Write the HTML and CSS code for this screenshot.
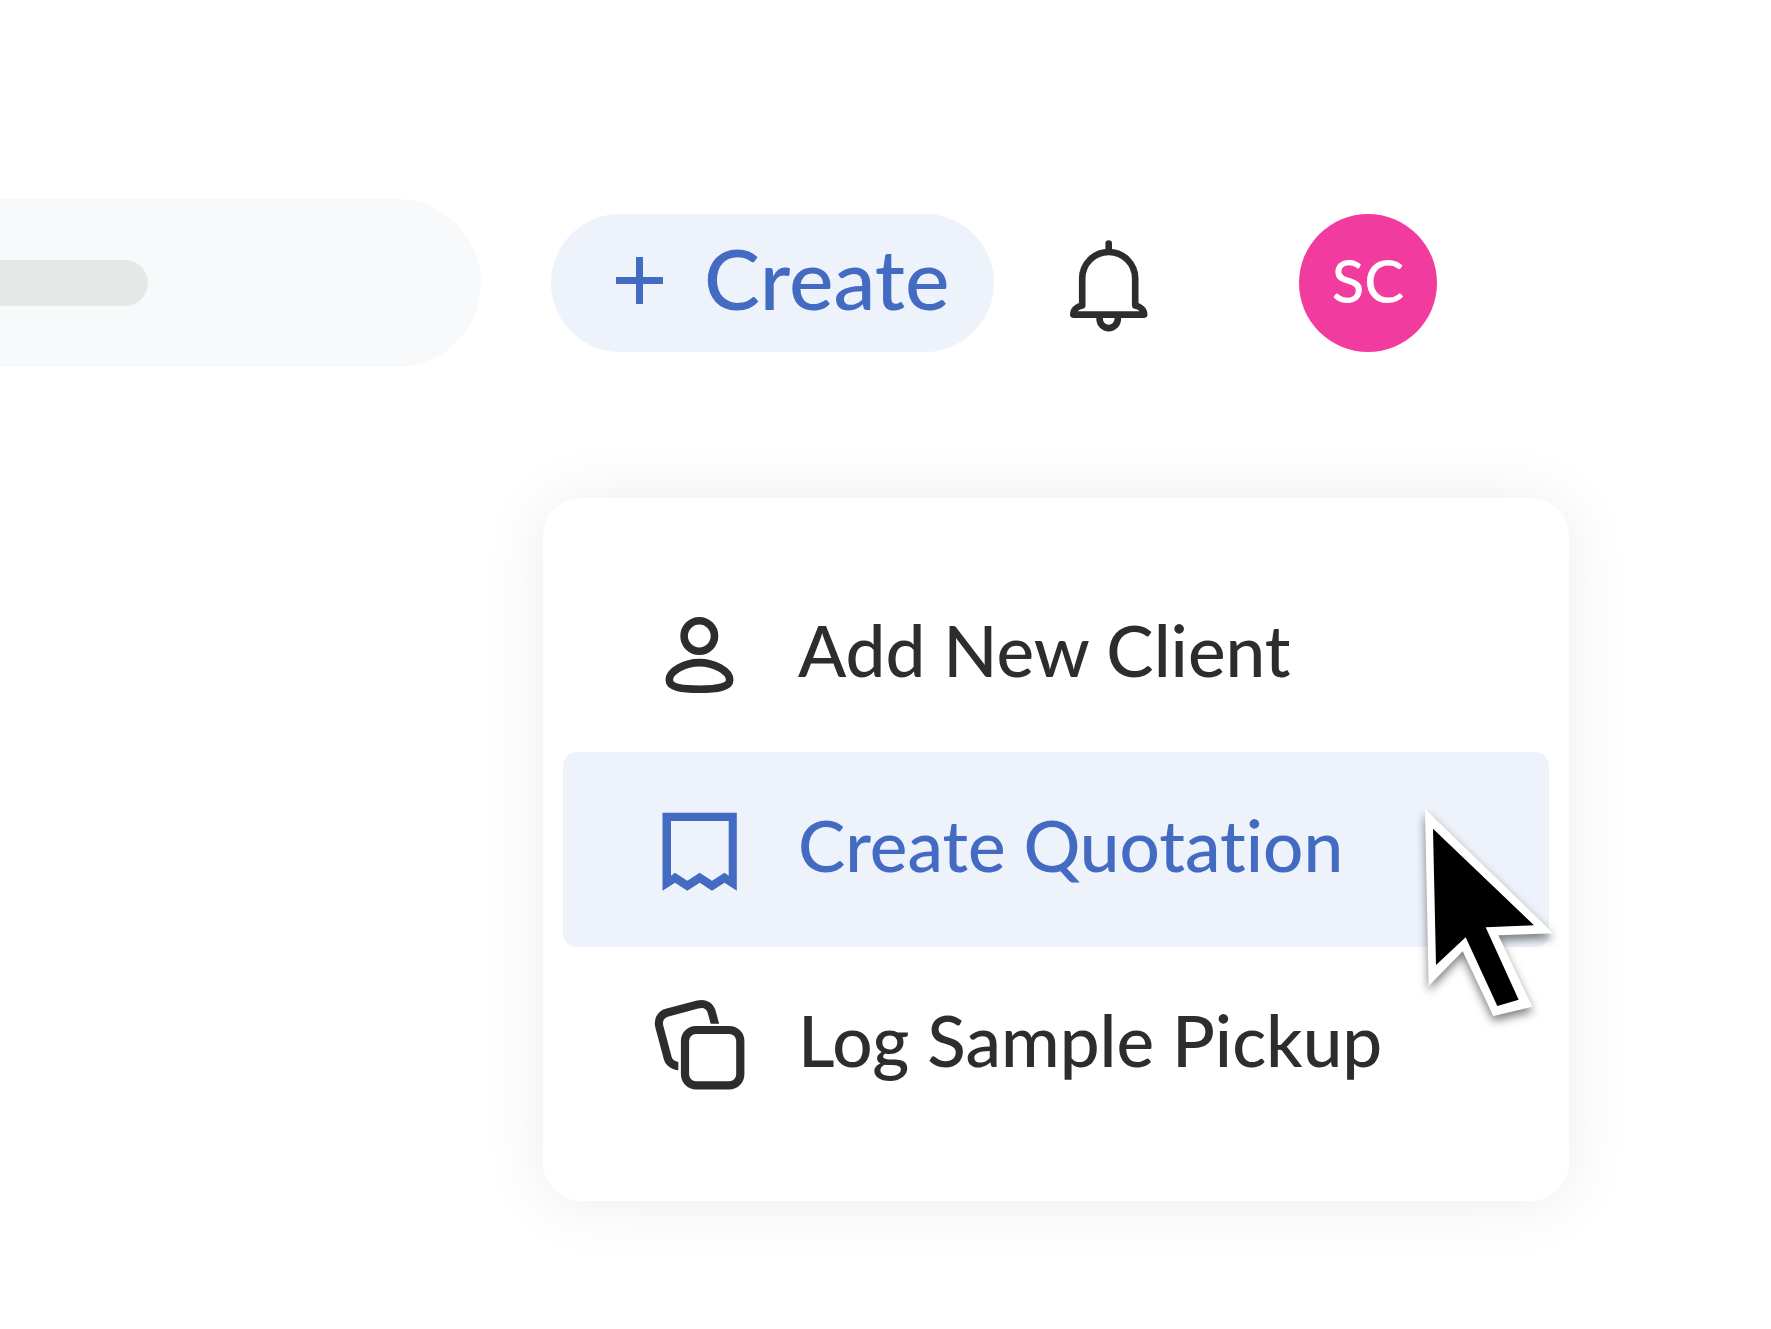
FILE: index.html
```html
<!DOCTYPE html>
<html lang="en">
<head>
<meta charset="utf-8">
<meta name="viewport" content="width=device-width, initial-scale=1">
<title>Create menu</title>
<link rel="stylesheet" href="styles.css">
</head>
<body>
<header class="topbar">
  <div class="search" aria-hidden="true"><span class="search-skeleton"></span></div>
  <button class="create" type="button" aria-haspopup="menu" aria-expanded="true">
    <svg class="create-icon" viewBox="0 0 47 47" aria-hidden="true"><path d="M23.5 0V47M0 23.5H47"/></svg>
    <span class="create-label">Create</span>
  </button>
  <button class="bell" type="button" aria-label="Notifications">
    <svg class="icon" viewBox="0 0 97 97" stroke-width="6.6" stroke-linecap="round" stroke-linejoin="round" aria-hidden="true">
      <path d="M47.7 8.5V16"/>
      <path d="M21.2 70.5V43.5A26.5 26.5 0 0 1 74.2 43.5V70.5C79 71.5 83.2 75 83.2 79.6H12.3C12.3 75 16 71.5 21.2 70.5Z"/>
      <path d="M38.6 82.5V84a9.1 9.1 0 0 0 18.2 0V82.5"/>
    </svg>
  </button>
  <button class="avatar" type="button" aria-label="Account SC">SC</button>
</header>

<main class="content">
  <div class="menu" role="menu">
    <button class="menu-item" type="button" role="menuitem">
      <svg class="icon" viewBox="0 0 97 97" stroke-width="7.6" aria-hidden="true">
        <circle cx="48.3" cy="30" r="15.2"/>
        <path d="M48.3 56.6C34 56.6 18.3 65 18.3 74C18.3 81 30 83.2 48.3 83.2S78.7 81 78.7 74C78.7 65 63 56.6 48.3 56.6Z"/>
      </svg>
      <span class="menu-label">Add New Client</span>
    </button>
    <button class="menu-item is-active" type="button" role="menuitem">
      <svg class="icon icon-solid" viewBox="0 0 97 97" aria-hidden="true">
        <path fill-rule="evenodd" d="M11.5 11.7H85.8V89.7L73.5 81.7L61 89.7L48.7 81.7L36.3 89.7L24 81.7L11.5 89.7ZM20 20V74.7L24 71.7L36.3 79.7L48.7 71.7L61 79.7L73.5 71.7L77.7 74.7V20Z"/>
      </svg>
      <span class="menu-label">Create Quotation</span>
    </button>
    <button class="menu-item" type="button" role="menuitem">
      <svg class="icon" viewBox="0 0 97 97" stroke-width="8.2" aria-hidden="true">
        <clipPath id="back-sheet"><path d="M0 0H97V27.7H27.3V97H0Z"/></clipPath>
        <path clip-path="url(#back-sheet)" d="M30 70.2C23 70.2 18 67 16.7 62L8.3 30.5C6.7 24.5 9.7 18.3 15.7 16.7L47 8.4C54 6.8 59.3 10 61 17L65 32"/>
        <rect x="34" y="34" width="55.3" height="55.3" rx="11"/>
      </svg>
      <span class="menu-label">Log Sample Pickup</span>
    </button>
    <svg class="cursor" viewBox="0 0 540 780" aria-hidden="true">
      <path fill="#fff" d="M75 87L460 460L295 466L397 680L280 708L188 514L86 618Z"/>
      <path fill="#000" d="M99 146L402 436L257 442L356 659L292 678L197 472L108 555Z"/>
    </svg>
  </div>
</main>
</body>
</html>
```
FILE: styles.css
```css
* {
  box-sizing: border-box;
}

body {
  margin: 0;
  background: #fff;
  color: #2d2d2d;
  font-family: Lato, "Noto Sans", sans-serif;
  font-weight: 500;
  font-variant-ligatures: none;
}

button {
  margin: 0;
  padding: 0;
  border: 0;
  background: none;
  color: inherit;
  font: inherit;
  font-variant-ligatures: none;
  cursor: pointer;
}

.topbar {
  display: flex;
  align-items: center;
  padding: 199px 334px 0 0;
}

.search {
  display: flex;
  flex: 1;
  align-items: center;
  height: 168px;
  margin-right: 70px;
  border-radius: 0 84px 84px 0;
  background: #f8f9fb;
}

.search-skeleton {
  width: 148px;
  height: 46px;
  border-radius: 0 23px 23px 0;
  background: #e6e8e7;
}

.create {
  display: flex;
  align-items: center;
  gap: 41px;
  width: 443px;
  height: 138px;
  padding-left: 65px;
  border-radius: 69px;
  background: #edf2fb;
  color: #436bc2;
  font-size: 84px;
  line-height: 96px;
}

.create-icon {
  width: 47px;
  height: 47px;
  margin-bottom: 6px;
  fill: none;
  stroke: currentColor;
  stroke-width: 7;
}

.create-label {
  padding-bottom: 10px;
}

.bell {
  display: flex;
  margin: 0 141px 0 67px;
}

.icon {
  flex: none;
  width: 97px;
  height: 97px;
  fill: none;
  stroke: currentColor;
}

.icon-solid {
  fill: currentColor;
  stroke: none;
}

.avatar {
  width: 138px;
  height: 138px;
  padding-bottom: 6px;
  border-radius: 50%;
  background: #f23b9f;
  color: #fff;
  font-size: 60px;
  line-height: 72px;
}

.content {
  display: flex;
  justify-content: flex-end;
  padding: 131px 202px 128px 0;
}

.menu {
  position: relative;
  width: 1026px;
  padding: 59px 20px;
  border-radius: 38px;
  background: #fff;
  box-shadow: 0 2px 64px rgba(0, 0, 0, 0.08);
}

.menu-item {
  display: flex;
  align-items: center;
  gap: 50px;
  width: 100%;
  height: 195px;
  padding-left: 88px;
  border-radius: 14px;
  font-size: 71px;
  line-height: 84px;
  white-space: nowrap;
}

.menu-item.is-active {
  background: #edf2fb;
  color: #436bc2;
}

.menu-label {
  padding-bottom: 10px;
}

.cursor {
  position: absolute;
  top: 282px;
  right: -11px;
  width: 180px;
  height: 260px;
  filter: drop-shadow(0 5px 5px rgba(0, 0, 0, 0.5));
  pointer-events: none;
}
```
